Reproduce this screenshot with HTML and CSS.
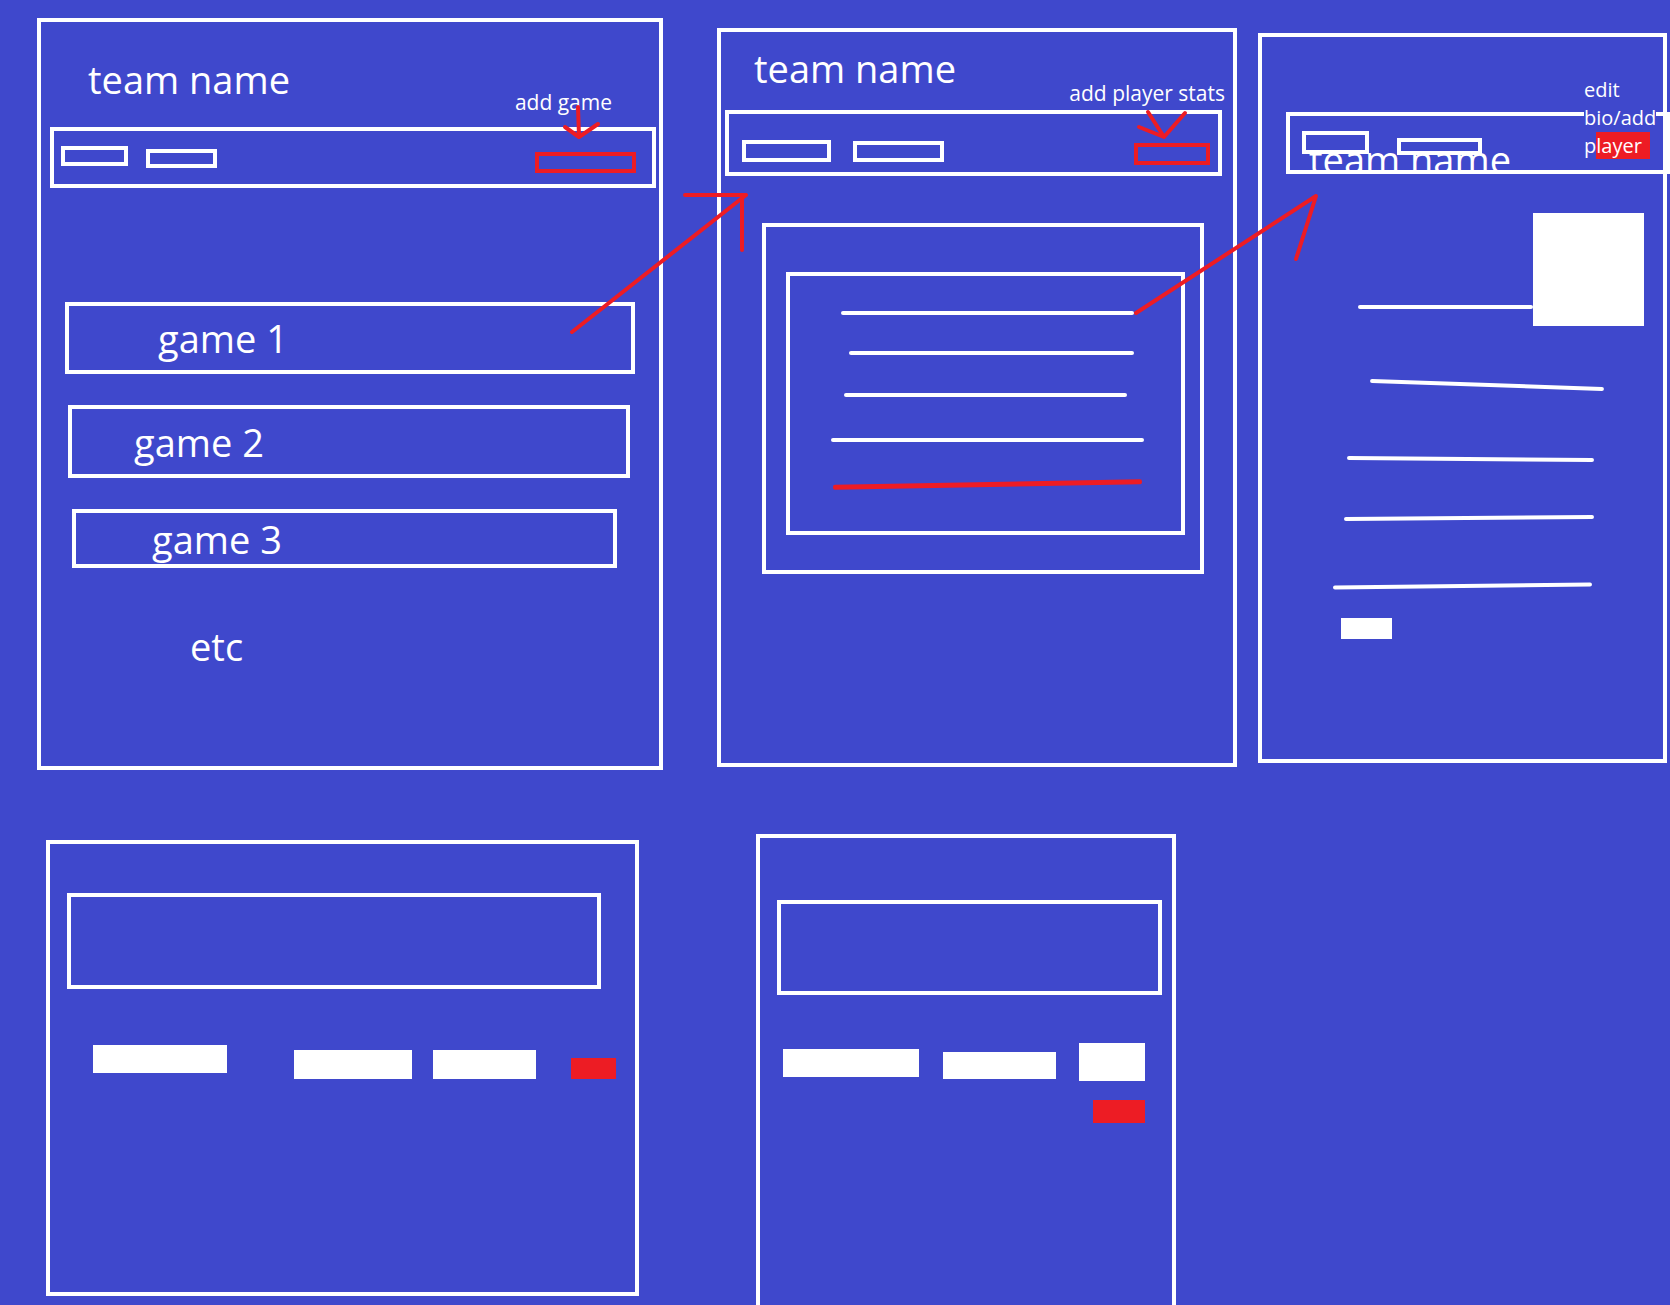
FILE: index.html
```html
<!DOCTYPE html>
<html lang="en">
<head>
  <meta charset="UTF-8" />
  <meta name="viewport" content="width=device-width, initial-scale=1.0"/>
  <title>Team app wireframe</title>
  <link rel="stylesheet" href="styles.css">
</head>
<body>
  <div class="board">

    <!-- screen 1: list of games -->
    <div class="panel games-screen">
      <div class="screen-head">
        <h1 class="team-title">team name</h1>
        <span class="action-label add-game">add game</span>
      </div>
      <div class="tab-bar bar-games">
        <span class="tab tab-a"></span>
        <span class="tab tab-b"></span>
        <span class="tab-action act-games"></span>
      </div>
      <div class="game-row game-1">game 1</div>
      <div class="game-row game-2">game 2</div>
      <div class="game-row game-3">game 3</div>
      <p class="more">etc</p>
    </div>

    <!-- screen 2: game stats -->
    <div class="panel stats-screen">
      <div class="screen-head">
        <h1 class="team-title">team name</h1>
        <span class="action-label add-stats">add player stats</span>
      </div>
      <div class="tab-bar bar-stats">
        <span class="tab tab-a"></span>
        <span class="tab tab-b"></span>
        <span class="tab-action act-stats"></span>
      </div>
      <div class="stat-card">
        <div class="stat-sheet">
          <div class="stroke s1"></div>
          <div class="stroke s2"></div>
          <div class="stroke s3"></div>
          <div class="stroke s4"></div>
          <div class="stroke s5"></div>
        </div>
      </div>
    </div>

    <!-- screen 3: player page -->
    <div class="panel player-screen">
      <div class="player-head">
        <h1 class="team-title">team name</h1>
        <div class="tab-bar bar-player">
          <span class="tab tab-a"></span>
          <span class="tab tab-b"></span>
        </div>
        <div class="player-actions">edit<br>bio/add<br>p<span class="mark">layer</span></div>
      </div>
      <div class="player-top">
        <div class="stroke photo-line"></div>
        <div class="photo"></div>
      </div>
      <div class="stroke l1"></div>
      <div class="stroke l2"></div>
      <div class="stroke l3"></div>
      <div class="stroke l4"></div>
      <div class="blk small-btn"></div>
    </div>

    <!-- screen 4: add game form -->
    <div class="panel game-form">
      <div class="field-box fb-game"></div>
      <div class="form-row row-game">
        <span class="blk g1"></span>
        <span class="blk g2"></span>
        <span class="blk g3"></span>
        <span class="blk red g4"></span>
      </div>
    </div>

    <!-- screen 5: add stats form -->
    <div class="panel stats-form">
      <div class="field-box fb-stats"></div>
      <div class="form-row row-stats">
        <span class="blk f1"></span>
        <span class="blk f2"></span>
        <span class="blk f3"></span>
      </div>
      <div class="blk red f4"></div>
    </div>

    <!-- red flow arrows drawn over the screens -->
    <svg class="arrows" width="1670" height="1305" viewBox="0 0 1670 1305">
      <g fill="none" stroke="#ed1c24" stroke-width="4" stroke-linecap="round" stroke-linejoin="round">
        <path d="M578 107 L579 136 M565 127 L579 137 L598 124"/>
        <path d="M1148 112 L1164 137 L1185 113 M1139 127 L1164 137"/>
        <path d="M572 332 L746 195 M685 195 L746 195 M742 195 L742 250"/>
        <path d="M1136 313 L1316 196 L1296 259"/>
      </g>
    </svg>
  </div>
</body>
</html>
```

FILE: styles.css
```css
body {
  margin: 0;
  background-color: #3f48cc;
  font-family: "Open Sans", "Noto Sans", sans-serif;
  color: #fff;
}
.board {
  position: relative;
  width: 1670px;
  height: 1305px;
  overflow: hidden;
  background-color: #3f48cc;
}
.panel {
  position: absolute;
  box-sizing: border-box;
  border: 4px solid #fff;
}
.arrows {
  position: absolute;
  left: 0;
  top: 0;
  pointer-events: none;
}

/* shared bits */
.screen-head {
  display: flex;
  justify-content: space-between;
  align-items: flex-start;
  box-sizing: border-box;
}
.team-title {
  margin: 0;
  font-size: 38px;
  line-height: 38px;
  font-weight: normal;
  white-space: nowrap;
}
.action-label {
  font-size: 21px;
  line-height: 21px;
  white-space: nowrap;
}
.tab-bar {
  display: flex;
  align-items: flex-start;
  box-sizing: border-box;
  border: 4px solid #fff;
}
.tab {
  box-sizing: border-box;
  border: 4px solid #fff;
  background-color: #3f48cc;
}
.tab-action {
  box-sizing: border-box;
  border: 4px solid #ed1c24;
}
.stroke {
  height: 4px;
  border-radius: 2px;
  background-color: #fff;
}
.blk {
  display: block;
  background-color: #fff;
}
.blk.red {
  background-color: #ed1c24;
}
.field-box {
  box-sizing: border-box;
  border: 4px solid #fff;
}
.form-row {
  display: flex;
  align-items: flex-start;
}

/* screen 1 */
.games-screen {
  left: 37px;
  top: 18px;
  width: 626px;
  height: 752px;
}
.games-screen .screen-head {
  height: 105px;
  padding: 0 47px;
}
.games-screen .team-title {
  margin-top: 38px;
}
.add-game {
  margin-top: 70px;
}
.bar-games {
  margin-left: 9px;
  width: 606px;
  height: 61px;
}
.bar-games .tab-a {
  margin: 15px 0 0 7px;
  width: 67px;
  height: 20px;
}
.bar-games .tab-b {
  margin: 18px 0 0 18px;
  width: 71px;
  height: 19px;
}
.act-games {
  margin: 21px 16px 0 auto;
  width: 101px;
  height: 21px;
}
.game-row {
  display: flex;
  align-items: center;
  box-sizing: border-box;
  border: 4px solid #fff;
  font-size: 38px;
  line-height: 38px;
}
.game-1 {
  margin: 114px 0 0 24px;
  width: 570px;
  height: 72px;
  padding-left: 89px;
}
.game-2 {
  margin: 31px 0 0 27px;
  width: 562px;
  height: 73px;
  padding-left: 62px;
}
.game-3 {
  margin: 31px 0 0 31px;
  width: 545px;
  height: 59px;
  padding-left: 76px;
}
.more {
  margin: 59px 0 0 149px;
  font-size: 38px;
  line-height: 38px;
}

/* screen 2 */
.stats-screen {
  left: 717px;
  top: 28px;
  width: 520px;
  height: 739px;
}
.stats-screen .screen-head {
  height: 78px;
  padding: 0 8px 0 33px;
}
.stats-screen .team-title {
  margin-top: 17px;
}
.add-stats {
  margin-top: 51px;
}
.bar-stats {
  margin-left: 4px;
  width: 497px;
  height: 66px;
}
.bar-stats .tab-a {
  margin: 26px 0 0 13px;
  width: 89px;
  height: 22px;
}
.bar-stats .tab-b {
  margin: 27px 0 0 22px;
  width: 91px;
  height: 21px;
}
.act-stats {
  margin: 29px 8px 0 auto;
  width: 76px;
  height: 22px;
}
.stat-card {
  box-sizing: border-box;
  margin: 47px 0 0 41px;
  width: 442px;
  height: 351px;
  padding: 45px 0 0 20px;
  border: 4px solid #fff;
}
.stat-sheet {
  box-sizing: border-box;
  width: 399px;
  height: 263px;
  padding-top: 35px;
  border: 4px solid #fff;
}
.s1 { margin-left: 51px; width: 293px; }
.s2 { margin: 36px 0 0 59px; width: 285px; }
.s3 { margin: 38px 0 0 54px; width: 283px; }
.s4 { margin: 41px 0 0 41px; width: 313px; }
.s5 {
  margin: 40px 0 0 43px;
  width: 309px;
  height: 5px;
  background-color: #ed1c24;
  transform: rotate(-1deg);
}

/* screen 3 */
.player-screen {
  left: 1258px;
  top: 33px;
  width: 409px;
  height: 730px;
}
.player-head {
  display: grid;
}
.player-head > * {
  grid-area: 1 / 1;
}
.player-screen .team-title {
  margin: 103px 0 0 47px;
}
.bar-player {
  margin: 75px 0 0 24px;
  width: 384px;
  height: 62px;
}
.bar-player .tab-a {
  margin: 15px 0 0 12px;
  width: 67px;
  height: 23px;
}
.bar-player .tab-b {
  margin: 22px 0 0 28px;
  width: 85px;
  height: 17px;
}
.player-actions {
  justify-self: start;
  align-self: start;
  margin: 39px 0 0 322px;
  font-size: 20px;
  line-height: 28px;
  background-color: #3f48cc;
  white-space: nowrap;
}
.mark {
  background-color: #ed1c24;
  padding-right: 8px;
}
.player-top {
  display: flex;
  align-items: flex-end;
  margin-top: 35px;
}
.photo-line {
  margin: 0 0 17px 96px;
  width: 175px;
}
.photo {
  width: 111px;
  height: 113px;
  background-color: #fff;
}
.l1 { margin: 57px 0 0 108px; width: 234px; transform: rotate(2deg); }
.l2 { margin: 70px 0 0 85px; width: 247px; transform: rotate(0.5deg); }
.l3 { margin: 55px 0 0 82px; width: 250px; transform: rotate(-0.5deg); }
.l4 { margin: 64px 0 0 71px; width: 259px; transform: rotate(-0.7deg); }
.small-btn {
  margin: 30px 0 0 79px;
  width: 51px;
  height: 21px;
}

/* screen 4 */
.game-form {
  left: 46px;
  top: 840px;
  width: 593px;
  height: 456px;
}
.fb-game {
  margin: 49px 0 0 17px;
  width: 534px;
  height: 96px;
}
.row-game {
  margin: 56px 0 0 43px;
}
.g1 { width: 134px; height: 28px; }
.g2 { margin: 5px 0 0 67px; width: 118px; height: 29px; }
.g3 { margin: 5px 0 0 21px; width: 103px; height: 29px; }
.g4 { margin: 13px 0 0 35px; width: 45px; height: 21px; }

/* screen 5 */
.stats-form {
  left: 756px;
  top: 834px;
  width: 420px;
  height: 500px;
}
.fb-stats {
  margin: 62px 0 0 17px;
  width: 385px;
  height: 95px;
}
.row-stats {
  margin: 48px 0 0 23px;
}
.f1 { margin-top: 6px; width: 136px; height: 28px; }
.f2 { margin: 9px 0 0 24px; width: 113px; height: 27px; }
.f3 { margin-left: 23px; width: 66px; height: 38px; }
.f4 {
  margin: 19px 0 0 333px;
  width: 52px;
  height: 23px;
}
```
